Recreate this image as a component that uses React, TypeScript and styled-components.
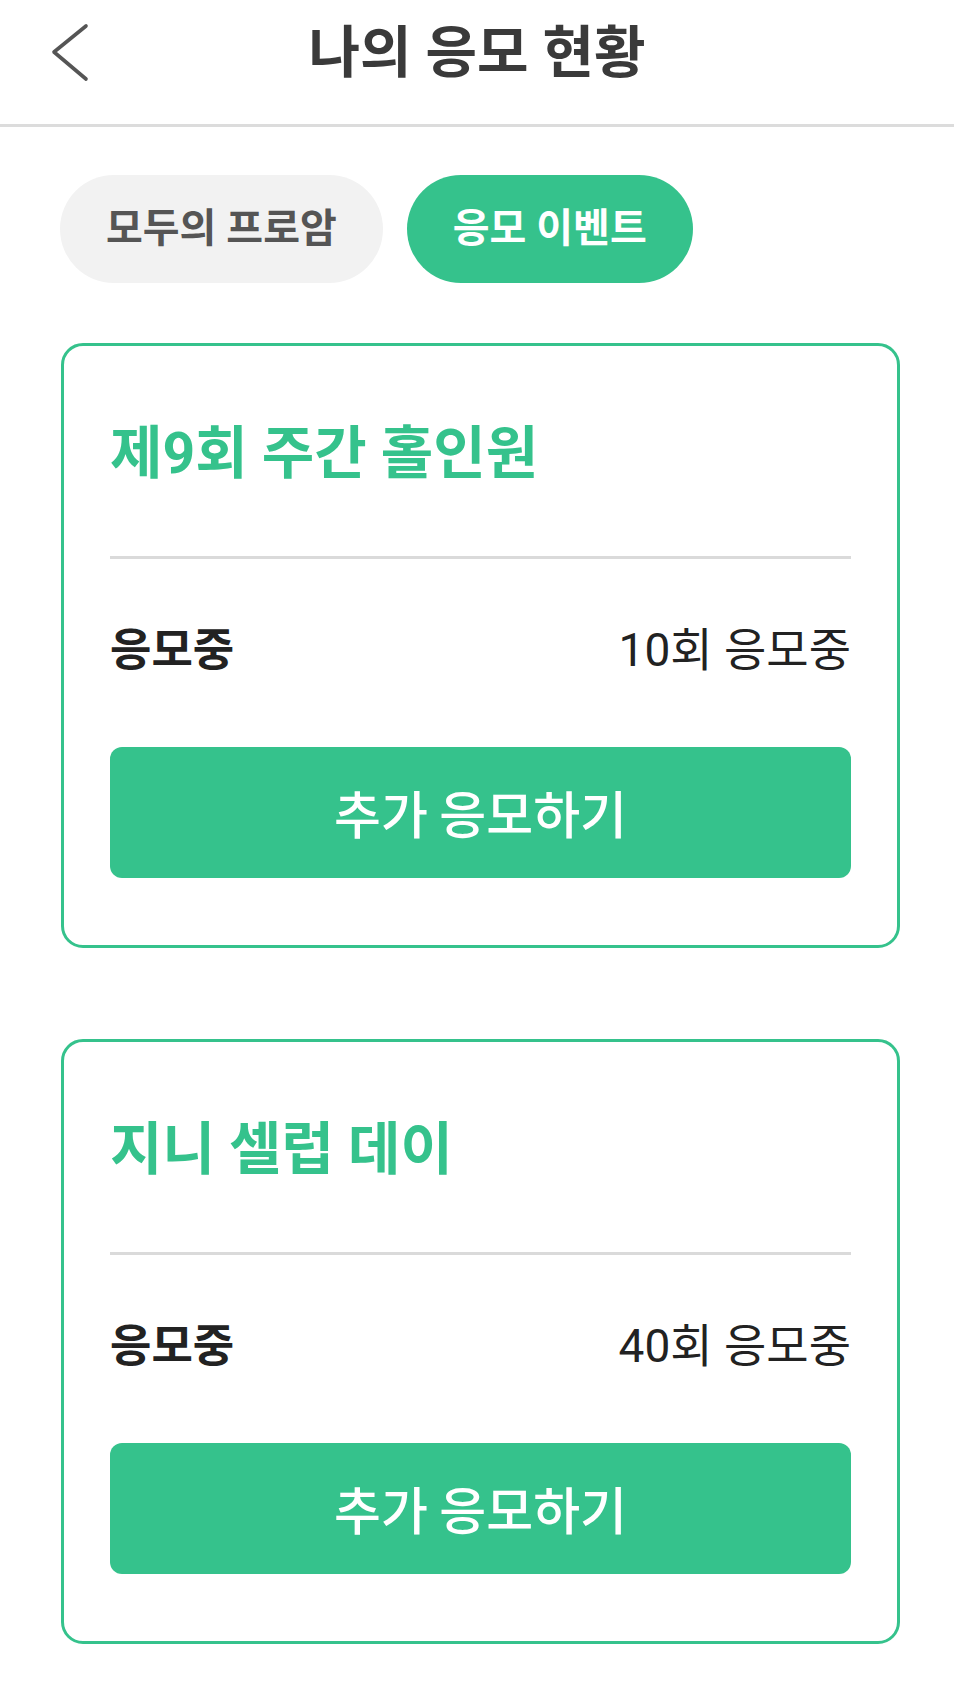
import React from 'react'
import styled, { createGlobalStyle } from 'styled-components'

const GREEN = '#35c28c'

const GlobalStyle = createGlobalStyle`
    html, body {
        margin: 0;
        padding: 0;
        background: #ffffff;
    }
    body {
        font-family: Roboto, "Noto Sans CJK KR", sans-serif;
        -webkit-font-smoothing: antialiased;
    }
    * {
        box-sizing: border-box;
    }
`

interface Entry {
    title: string
    count: number
}

const entries: Entry[] = [
    { title: '제9회 주간 홀인원', count: 10 },
    { title: '지니 셀럽 데이', count: 40 },
]

const BackIcon = () => (
    <svg width="40" height="60" viewBox="0 0 40 60" fill="none">
        <path d="M35 3 L3 29 L35 56" stroke="#555555" strokeWidth="3.6" strokeLinecap="round" strokeLinejoin="round" />
    </svg>
)

const App = () => {
    return (
        <Page>
            <GlobalStyle />
            <Header>
                <BackButton aria-label="back">
                    <BackIcon />
                </BackButton>
                <HeaderTitle>나의 응모 현황</HeaderTitle>
                <span />
            </Header>

            <Tabs>
                <Tab>모두의 프로암</Tab>
                <Tab active>응모 이벤트</Tab>
            </Tabs>

            <CardList>
                {entries.map((entry) => (
                    <Card key={entry.title}>
                        <CardTitle>{entry.title}</CardTitle>
                        <Divider />
                        <StatusRow>
                            <StatusLabel>응모중</StatusLabel>
                            <StatusValue>{entry.count}회 응모중</StatusValue>
                        </StatusRow>
                        <ApplyButton>추가 응모하기</ApplyButton>
                    </Card>
                ))}
            </CardList>
        </Page>
    )
}

export default App

const Page = styled.div`
    width: 954px;
    min-height: 1694px;
    background: #ffffff;
`

const Header = styled.header`
    height: 127px;
    padding-bottom: 19px;
    display: grid;
    grid-template-columns: 1fr auto 1fr;
    align-items: center;
    border-bottom: 3px solid #dcdcdc;
`

const BackButton = styled.button`
    justify-self: start;
    margin-left: 51px;
    padding: 0;
    border: none;
    background: none;
    display: flex;
    align-items: center;
    cursor: pointer;
`

const HeaderTitle = styled.h1`
    margin: 0;
    font-size: 56px;
    line-height: 1;
    font-weight: 700;
    color: #3a3a3a;
`

const Tabs = styled.nav`
    display: flex;
    gap: 24px;
    padding: 48px 54px 0 60px;
`

interface TabProps {
    active?: boolean
}

const Tab = styled.button<TabProps>`
    height: 108px;
    padding: 0 46px;
    border: none;
    border-radius: 54px;
    font-family: inherit;
    font-size: 40px;
    font-weight: 700;
    line-height: 1;
    background: ${({ active }) => active ? GREEN : '#f2f2f2'};
    color: ${({ active }) => active ? '#ffffff' : '#555555'};
    cursor: pointer;
`

const CardList = styled.main`
    display: flex;
    flex-direction: column;
    gap: 91px;
    padding: 60px 54px 0 61px;
`

const Card = styled.section`
    height: 605px;
    border: 3px solid ${GREEN};
    border-radius: 22px;
    padding: 79px 46px 0 46px;
    display: flex;
    flex-direction: column;
`

const CardTitle = styled.h2`
    margin: 0;
    font-size: 57px;
    line-height: 1;
    font-weight: 700;
    color: ${GREEN};
`

const Divider = styled.hr`
    margin: 74px 0 0;
    border: none;
    height: 3px;
    background: #dadada;
`

const StatusRow = styled.div`
    margin-top: 68px;
    display: flex;
    justify-content: space-between;
    align-items: center;
    font-size: 45px;
    line-height: 1;
    color: #222222;
`

const StatusLabel = styled.span`
    font-weight: 700;
`

const StatusValue = styled.span`
    font-size: 46px;
    font-weight: 400;
`

const ApplyButton = styled.button`
    margin-top: 74px;
    height: 131px;
    border: none;
    border-radius: 12px;
    background: ${GREEN};
    color: #ffffff;
    font-family: "Noto Sans CJK KR Medium", "Noto Sans CJK KR", sans-serif;
    font-size: 51px;
    font-weight: 500;
    line-height: 1;
    cursor: pointer;
`
